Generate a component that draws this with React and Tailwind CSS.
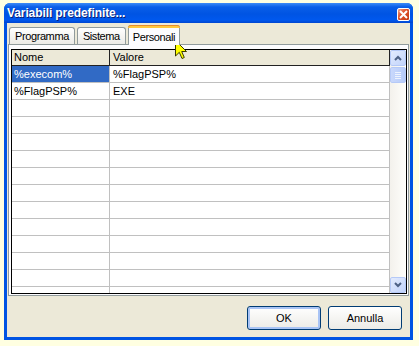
import React from 'react';

const rows = [
    { nome: '%execom%', valore: '%FlagPSP%', selected: true },
    { nome: '%FlagPSP%', valore: 'EXE' },
];

const TOTAL_ROWS = 14;

const CloseButton = () => (
    <div className="w-[13px] h-[13px] mt-[2px] rounded-[2px] border border-white bg-[linear-gradient(135deg,#f0a58c_0%,#e0552e_40%,#c33a12_100%)] flex items-center justify-center">
        <svg width="9" height="9" viewBox="0 0 9 9">
            <path d="M1 1 L8 8 M8 1 L1 8" stroke="#fff" strokeWidth="2" />
        </svg>
    </div>
);

const ScrollButton = ({ up }) => (
    <div className="w-[16px] h-[16px] rounded-[2px] border border-[#b5c9f7] bg-[linear-gradient(135deg,#e3ebfd,#c1d3fb)] flex items-center justify-center">
        <svg width="8" height="6" viewBox="0 0 8 6">
            <path d={up ? 'M1 5 L4 2 L7 5' : 'M1 1 L4 4 L7 1'} stroke="#4d6185" strokeWidth="2" fill="none" />
        </svg>
    </div>
);

const Cursor = () => (
    <svg className="absolute left-[175px] top-[40px]" width="13" height="20" viewBox="0 0 13 20">
        <path d="M0.5 0.5 L0.5 16 L4.3 12.3 L7 18.5 L9.3 17.5 L6.7 11.5 L11.5 11.5 Z" fill="#ffff00" stroke="#3a3a00" strokeWidth="1" />
    </svg>
);

const Tab = ({ label, active }) => (
    active ? (
        <div className="relative h-[20px] px-[4px] bg-[#fcfcfe] border border-b-0 border-[#919b9c] rounded-t-[3px] flex items-start pt-[3px] -mb-[1px] z-10 tracking-[-0.4px]">
            <div className="absolute left-[-1px] right-[-1px] top-[-1px] h-[3px] rounded-t-[3px] bg-[#ffc83c] border-t border-[#e68b2c]" />
            {label}
        </div>
    ) : (
        <div className="h-[17px] mt-[2px] px-[5px] mr-[2px] bg-[linear-gradient(#ffffff,#ecebe6)] border border-b-0 border-[#919b9c] rounded-t-[3px] flex items-center tracking-[-0.4px]">
            {label}
        </div>
    )
);

const App = () => {
    const filler = Array.from({ length: TOTAL_ROWS - rows.length });

    return (
        <div className="relative w-[419px] h-[346px] bg-[#ffffe1] pt-[3px] pl-[4px] font-['Liberation_Sans',sans-serif] text-[11px] text-black">
            <div className="w-[409px] h-[337px] flex flex-col rounded-t-[6px] overflow-hidden bg-[#0054e3]">
                {/* title bar */}
                <div className="h-[20px] shrink-0 flex items-center justify-between pl-[3px] pr-[3px] bg-[linear-gradient(#3d8cf7_0%,#0a5fe8_20%,#0054e3_55%,#0058ee_85%,#0046d0_100%)]">
                    <span className="text-white font-bold text-[12px] tracking-[-0.1px] [text-shadow:1px_1px_0_#0a1f78]">Variabili predefinite...</span>
                    <CloseButton />
                </div>
                {/* body */}
                <div className="flex-1 flex flex-col mx-[3px] mb-[3px] bg-[#ece9d8]">
                    <div className="flex flex-col px-[1px] pt-[1px]">
                        <div className="flex items-end h-[20px] pl-[1px]">
                            <Tab label="Programma" />
                            <Tab label="Sistema" />
                            <Tab label="Personali" active />
                        </div>
                        <div className="h-[252px] border border-[#919b9c] bg-[#fcfcfe] pt-[4px] pl-[2px] pr-[1px]">
                            <div className="w-[396px] h-[245px] border border-black bg-white flex overflow-hidden">
                                <div className="flex-1 flex flex-col">
                                    <div className="h-[16px] shrink-0 flex bg-[#ece9d8] border-b border-[#222]">
                                        <div className="w-[98px] pl-[2px] border-r border-[#222] flex items-center">Nome</div>
                                        <div className="flex-1 pl-[3px] border-r border-[#222] flex items-center">Valore</div>
                                    </div>
                                    {rows.map((r) => (
                                        <div key={r.nome} className="h-[17px] shrink-0 flex border-b border-[#c0c0c0]">
                                            <div className={`w-[98px] pl-[2px] border-r border-[#c0c0c0] flex items-center ${r.selected ? 'bg-[#316ac5] text-white' : ''}`}>{r.nome}</div>
                                            <div className="flex-1 pl-[3px] border-r border-[#c0c0c0] flex items-center">{r.valore}</div>
                                        </div>
                                    ))}
                                    {filler.map((_, i) => (
                                        <div key={i} className="h-[17px] shrink-0 flex border-b border-[#c0c0c0]">
                                            <div className="w-[98px] border-r border-[#c0c0c0]" />
                                            <div className="flex-1 border-r border-[#c0c0c0]" />
                                        </div>
                                    ))}
                                </div>
                                {/* scrollbar */}
                                <div className="w-[16px] shrink-0 flex flex-col justify-between bg-[linear-gradient(90deg,#f3f1ec,#fefefb)]">
                                    <div className="flex flex-col">
                                        <ScrollButton up />
                                        <div className="h-[16px] mt-[1px] rounded-[2px] border border-[#b5c9f7] bg-[linear-gradient(90deg,#c9d8fc,#b6cbf9)] flex flex-col items-center justify-center gap-[1px]">
                                            <div className="w-[6px] h-[1px] bg-[#eef3fe]" />
                                            <div className="w-[6px] h-[1px] bg-[#eef3fe]" />
                                            <div className="w-[6px] h-[1px] bg-[#eef3fe]" />
                                            <div className="w-[6px] h-[1px] bg-[#eef3fe]" />
                                        </div>
                                    </div>
                                    <ScrollButton />
                                </div>
                            </div>
                        </div>
                    </div>
                    {/* buttons */}
                    <div className="flex justify-end gap-[7px] pt-[10px] pr-[8px]">
                        <button className="w-[74px] h-[24px] rounded-[3px] border border-[#003c74] bg-[linear-gradient(#ffffff,#ecebe6)] shadow-[inset_0_0_0_2px_#a9c4f5] font-['Liberation_Sans',sans-serif] text-[11px]">OK</button>
                        <button className="w-[74px] h-[24px] rounded-[3px] border border-[#003c74] bg-[linear-gradient(#ffffff,#ecebe6)] font-['Liberation_Sans',sans-serif] text-[11px]">Annulla</button>
                    </div>
                </div>
            </div>
            <Cursor />
        </div>
    );
};

export default App;
